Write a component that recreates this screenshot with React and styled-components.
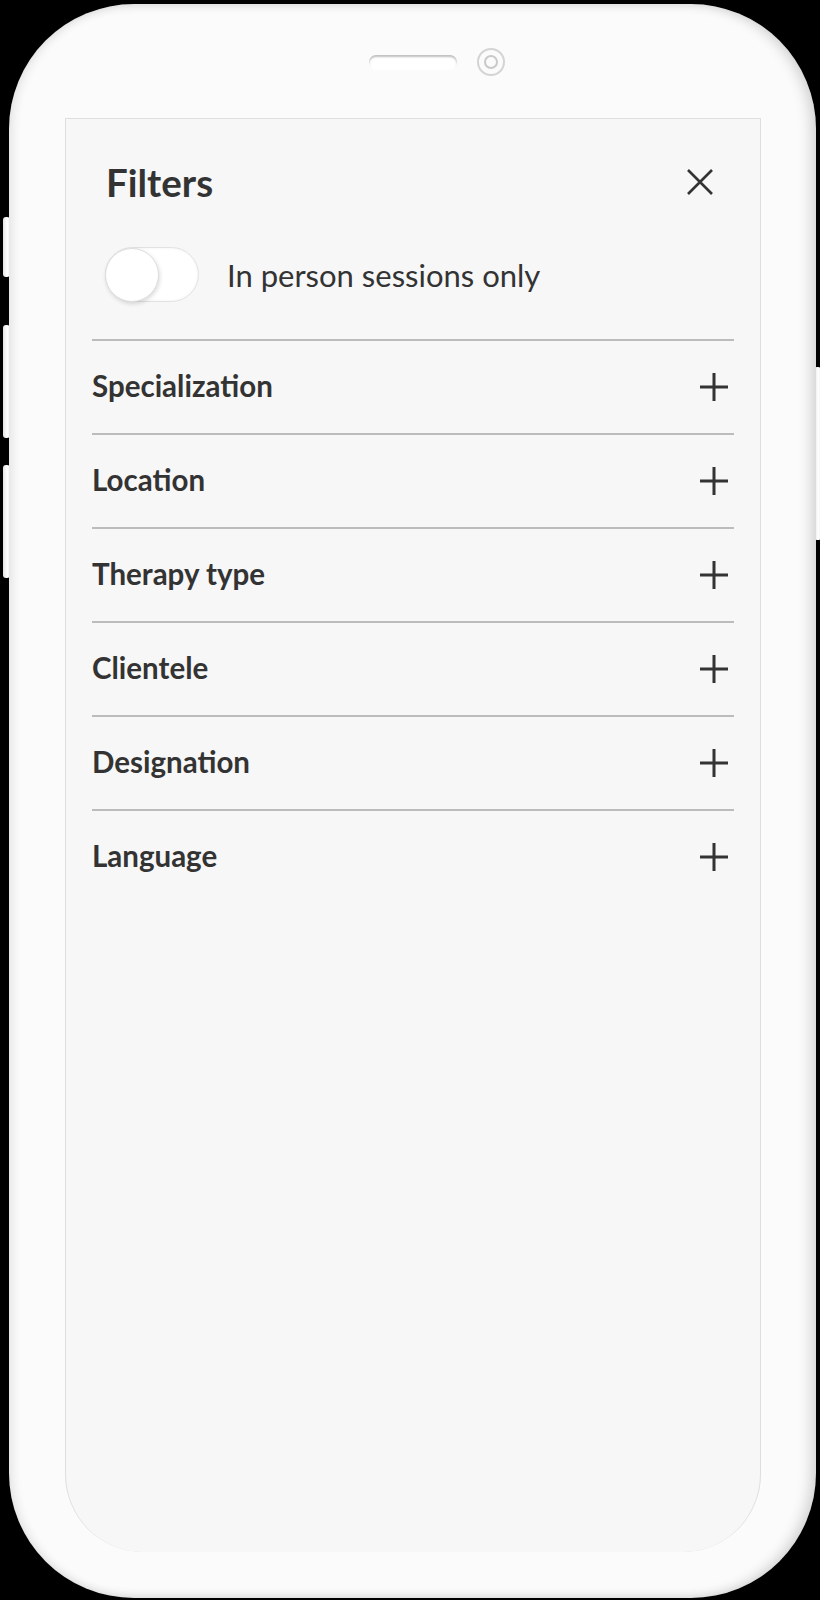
import React from "react";
import styled, { createGlobalStyle } from "styled-components";

const Global = createGlobalStyle`
  html, body { margin: 0; padding: 0; background: #000; }
  body { font-family: "Lato", "Open Sans", sans-serif; }
`;

const Page = styled.div`
  width: 820px;
  height: 1600px;
  background: #000;
  position: relative;
  overflow: hidden;
`;

const Phone = styled.div`
  position: absolute;
  left: 9px;
  top: 4px;
  width: 807px;
  height: 1594px;
  border-radius: 125px;
  background: #fbfbfb;
  box-shadow: inset 0 0 12px rgba(0, 0, 0, 0.08), inset -8px 0 12px rgba(0, 0, 0, 0.1),
    inset 6px 0 10px rgba(0, 0, 0, 0.04);
  display: flex;
  flex-direction: column;
  box-sizing: border-box;
`;

const SideButton = styled.div`
  position: absolute;
  width: 7px;
  border-radius: 3px;
  background: linear-gradient(90deg, #e4e4e4, #fff 60%, #eee);
  ${(p) => (p.$right ? "left: 814px;" : "left: 3px;")}
  top: ${(p) => p.$top}px;
  height: ${(p) => p.$h}px;
`;

const Bezel = styled.div`
  height: 114px;
  display: flex;
  justify-content: center;
  align-items: flex-start;
  padding-top: 51px;
  box-sizing: border-box;
  gap: 20px;
  padding-left: 48px;
`;

const Speaker = styled.div`
  width: 88px;
  height: 14px;
  border-radius: 7px;
  background: #fff;
  box-shadow: inset 0 2px 2px rgba(0, 0, 0, 0.25), 0 1px 1px rgba(255, 255, 255, 0.9);
`;

const Camera = styled.div`
  width: 28px;
  height: 28px;
  margin-top: -7px;
  border-radius: 50%;
  box-sizing: border-box;
  border: 2px solid #d4d4d4;
  background: #fbfbfb;
  display: flex;
  align-items: center;
  justify-content: center;
  &::after {
    content: "";
    width: 14px;
    height: 14px;
    border-radius: 50%;
    border: 2px solid #c9c9c9;
    box-sizing: border-box;
  }
`;

const Screen = styled.div`
  margin: 0 55px 0 56px;
  height: 1434px;
  box-sizing: border-box;
  background: #f7f7f7;
  border: 1px solid #dedede;
  border-bottom: none;
  border-radius: 0 0 78px 78px;
  padding: 31px 26px 0 26px;
  color: #333;
`;

const Header = styled.div`
  height: 64px;
  display: flex;
  align-items: center;
  justify-content: space-between;
  padding: 0 21px 0 14px;
`;

const Title = styled.h1`
  margin: 0;
  font-size: 38.5px;
  font-weight: 700;
  line-height: 1;
  color: #333;
`;

const IconButton = styled.button`
  border: none;
  background: none;
  padding: 0;
  width: 26px;
  height: 26px;
  display: flex;
  cursor: pointer;
`;

const ToggleRow = styled.label`
  display: flex;
  align-items: center;
  gap: 28px;
  margin-top: 33px;
  padding-left: 13px;
  height: 55px;
`;

const Track = styled.span`
  width: 94px;
  height: 55px;
  border-radius: 28px;
  background: #fff;
  box-sizing: border-box;
  border: 1px solid #e2e2e2;
  box-shadow: inset 0 0 3px rgba(0, 0, 0, 0.06);
  display: flex;
  align-items: center;
  flex-shrink: 0;
`;

const Knob = styled.span`
  width: 54px;
  height: 54px;
  margin-left: -1px;
  border-radius: 50%;
  background: #fff;
  box-sizing: border-box;
  border: 1px solid #dedede;
  box-shadow: 1px 2px 4px rgba(0, 0, 0, 0.14);
`;

const ToggleText = styled.span`
  font-size: 31px;
  font-weight: 400;
  color: #333;
`;

const List = styled.div`
  margin-top: 37px;
`;

const Row = styled.div`
  height: 94px;
  box-sizing: border-box;
  border-top: 2px solid #bcbcbc;
  display: flex;
  align-items: center;
  justify-content: space-between;
  padding: 0 6px 0 0;
`;

const Label = styled.span`
  font-size: 29.5px;
  font-weight: 700;
  color: #333;
  margin-top: -3px;
`;

const PlusIcon = () => (
  <svg width="28" height="28" viewBox="0 0 28 28">
    <path d="M14 0v28M0 14h28" stroke="#333" strokeWidth="3" fill="none" />
  </svg>
);

const CloseIcon = () => (
  <svg width="26" height="26" viewBox="0 0 26 26">
    <path d="M1 1L25 25M25 1L1 25" stroke="#333" strokeWidth="2.6" fill="none" />
  </svg>
);

const items = ["Specialization", "Location", "Therapy type", "Clientele", "Designation", "Language"];

export default function App() {
  return (
    <Page>
      <Global />
      <SideButton $top={217} $h={60} />
      <SideButton $top={325} $h={113} />
      <SideButton $top={465} $h={113} />
      <SideButton $right $top={367} $h={173} />
      <Phone>
        <Bezel>
          <Speaker />
          <Camera />
        </Bezel>
        <Screen>
          <Header>
            <Title>Filters</Title>
            <IconButton aria-label="Close">
              <CloseIcon />
            </IconButton>
          </Header>
          <ToggleRow>
            <Track>
              <Knob />
            </Track>
            <ToggleText>In person sessions only</ToggleText>
          </ToggleRow>
          <List>
            {items.map((it) => (
              <Row key={it}>
                <Label>{it}</Label>
                <PlusIcon />
              </Row>
            ))}
          </List>
        </Screen>
      </Phone>
    </Page>
  );
}
